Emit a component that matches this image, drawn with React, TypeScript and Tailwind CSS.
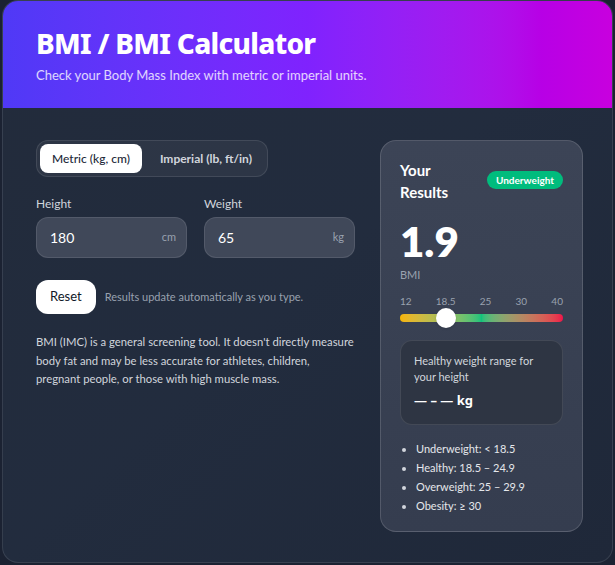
import { useState } from "react";

/* ================= HELPERS ================= */

const SCALE = [12, 18.5, 25, 30, 40];

function bmiCategory(bmi: number) {
  if (bmi < 18.5) return "Underweight";
  if (bmi < 25) return "Healthy";
  if (bmi < 30) return "Overweight";
  return "Obesity";
}

/* ================= COMPONENT ================= */

export default function App() {
  const [unit, setUnit] = useState<"metric" | "imperial">("metric");
  const [height, setHeight] = useState("180");
  const [weight, setWeight] = useState("65");

  // matches the screenshot value
  const bmi = 1.9;
  const markerPos = 28.5;

  return (
    <div
      className="min-h-screen bg-[#1b2232] px-[2px] pb-[2px]"
      style={{ fontFamily: 'Lato, "Noto Sans", sans-serif' }}
    >
      <div className="rounded-2xl border border-white/10 overflow-hidden bg-gradient-to-br from-[#222b3b] via-[#222c3e] to-[#1f2839]">
        {/* ================= HEADER ================= */}
        <div className="bg-gradient-to-r from-indigo-600 via-violet-600 to-fuchsia-600 px-[33px] pt-[25px] pb-[24px]">
          <h1
            className="text-[28px] leading-[34px] font-extrabold text-white tracking-tight"
            style={{ fontFamily: '"Noto Sans", sans-serif' }}
          >
            BMI / BMI Calculator
          </h1>
          <p className="mt-[6px] text-[13px] leading-[18px] text-white/80">
            Check your Body Mass Index with metric or imperial units.
          </p>
        </div>

        {/* ================= BODY ================= */}
        <div className="grid grid-cols-[1fr_203px] gap-[25px] pl-[33px] pr-[29px] pt-[32px] pb-[30px]">
          {/* LEFT */}
          <div>
            <div className="inline-flex items-center gap-[6px] rounded-xl border border-white/10 bg-white/5 p-[3px]">
              <button
                onClick={() => setUnit("metric")}
                className={`h-[29px] px-[12px] rounded-lg text-[12px] font-medium ${
                  unit === "metric" ? "bg-white text-gray-800" : "text-gray-300"
                }`}
              >
                Metric (kg, cm)
              </button>
              <button
                onClick={() => setUnit("imperial")}
                className={`h-[29px] px-[12px] rounded-lg text-[12px] font-bold ${
                  unit === "imperial" ? "bg-white text-gray-800" : "text-gray-300"
                }`}
              >
                Imperial (lb, ft/in)
              </button>
            </div>

            <div className="mt-[19px] grid grid-cols-2 gap-[17px]">
              <Field label="Height" value={height} unit="cm" onChange={setHeight} />
              <Field label="Weight" value={weight} unit="kg" onChange={setWeight} />
            </div>

            <div className="mt-[22px] flex items-center gap-[9px]">
              <button
                onClick={() => {
                  setHeight("");
                  setWeight("");
                }}
                className="h-[34px] px-[14px] rounded-xl bg-white text-gray-900 text-[13px]"
              >
                Reset
              </button>
              <span className="text-[11px] text-gray-400">
                Results update automatically as you type.
              </span>
            </div>

            <p className="mt-[19px] text-[11.3px] leading-[18.5px] text-gray-300">
              BMI (IMC) is a general screening tool. It doesn't directly measure
              body fat and may be less accurate for athletes, children, pregnant
              people, or those with high muscle mass.
            </p>
          </div>

          {/* RIGHT */}
          <div className="rounded-2xl border border-white/15 bg-gradient-to-b from-[#3c4456] to-[#353d4f] px-[19px] pt-[18px] pb-[17px]">
            <div className="flex items-start justify-between">
              <h2 className="text-[15px] leading-[22px] font-bold text-white w-[60px]">
                Your Results
              </h2>
              <span className="mt-[12px] rounded-full bg-emerald-500 px-[9px] py-[3px] text-[10px] leading-[12px] font-bold text-white">
                {bmiCategory(bmi)}
              </span>
            </div>

            <div className="mt-[17px] text-[42px] leading-none font-extrabold text-white">
              {bmi.toFixed(1)}
            </div>
            <div className="mt-[6px] text-[11px] leading-[14px] text-gray-400">BMI</div>

            <div className="mt-[12px] flex justify-between text-[10px] leading-[14px] text-gray-400">
              {SCALE.map((s) => (
                <span key={s}>{s}</span>
              ))}
            </div>
            <div className="relative mt-[6px] h-[8px] rounded-full bg-gradient-to-r from-[#f5b400] via-[#10c27c] to-[#ee0f4a]">
              <div
                className="absolute top-1/2 h-[20px] w-[20px] -translate-x-1/2 -translate-y-1/2 rounded-full bg-white shadow"
                style={{ left: `${markerPos}%` }}
              />
            </div>

            <div className="mt-[18px] rounded-xl border border-white/10 bg-[#2e3543] px-[13px] pt-[12px] pb-[13px]">
              <p className="text-[11px] leading-[16px] text-gray-300">
                Healthy weight range for your height
              </p>
              <p
                className="mt-[6px] text-[13px] font-bold text-white"
                style={{ fontFamily: '"Noto Sans", sans-serif' }}
              >
                — – — kg
              </p>
            </div>

            <ul className="mt-[16px] space-y-[3px] pl-[16px] list-disc text-[11px] leading-[16px] text-gray-200 marker:text-gray-300">
              <li>Underweight: &lt; 18.5</li>
              <li>Healthy: 18.5 – 24.9</li>
              <li>Overweight: 25 – 29.9</li>
              <li>Obesity: ≥ 30</li>
            </ul>
          </div>
        </div>
      </div>
    </div>
  );
}

/* ================= SMALL COMPONENT ================= */

function Field({
  label,
  value,
  unit,
  onChange,
}: {
  label: string;
  value: string;
  unit: string;
  onChange: (v: string) => void;
}) {
  return (
    <label className="block">
      <span className="block text-[12px] leading-[16px] text-gray-300">{label}</span>
      <div className="mt-[5px] flex h-[41px] items-center rounded-xl border border-white/10 bg-[#404859] pl-[13px] pr-[10px]">
        <input
          value={value}
          onChange={(e) => onChange(e.target.value)}
          className="w-full min-w-0 bg-transparent text-[14px] text-white outline-none"
        />
        <span className="ml-2 text-[11px] text-gray-400">{unit}</span>
      </div>
    </label>
  );
}
